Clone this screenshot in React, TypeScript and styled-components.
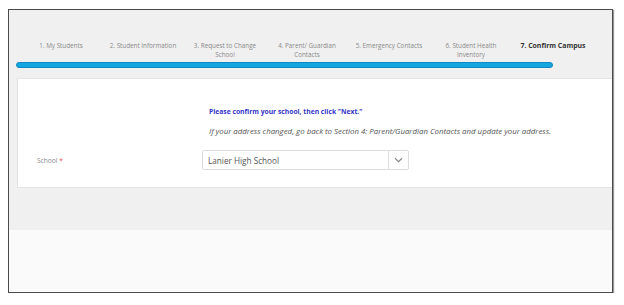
import React from 'react';
import styled, { createGlobalStyle } from 'styled-components';

const steps = [
  ['1. My Students'],
  ['2. Student Information'],
  ['3. Request to Change', 'School'],
  ['4. Parent/ Guardian', 'Contacts'],
  ['5. Emergency Contacts'],
  ['6. Student Health', 'Inventory'],
  ['7. Confirm Campus'],
];

const GlobalStyle = createGlobalStyle`
  html, body {
    margin: 0;
    padding: 0;
    background: #ffffff;
    font-family: "Open Sans", "Liberation Sans", sans-serif;
  }
`;

const App: React.FC = () => {
  return (
    <>
      <GlobalStyle />
      <Frame>
        <Header>
          <Steps>
            {steps.map((lines, i) => (
              <Step key={i} $active={i === steps.length - 1}>
                {lines.map(l => (
                  <div key={l}>{l}</div>
                ))}
              </Step>
            ))}
          </Steps>
          <ProgressBar />
        </Header>
        <Card>
          <Message>
            <Notice>Please confirm your school, then click "Next."</Notice>
            <Hint>
              If your address changed, go back to Section 4: Parent/Guardian Contacts and update your address.
            </Hint>
          </Message>
          <FieldRow>
            <Label>
              School <Required>*</Required>
            </Label>
            <Select>
              <SelectValue>Lanier High School</SelectValue>
              <SelectToggle>
                <svg width="9" height="6" viewBox="0 0 9 6" fill="none">
                  <path d="M1 1.2L4.5 4.6L8 1.2" stroke="#8a8a8a" strokeWidth="1.2" />
                </svg>
              </SelectToggle>
            </Select>
          </FieldRow>
        </Card>
        <GrayBand />
        <Footer />
      </Frame>
    </>
  );
};

export default App;

const Frame = styled.div`
  margin: 9px 11px 0 8px;
  height: 282px;
  border: 1px solid #4a4a4a;
  box-shadow: 1px 1px 1px #9a9a9a;
  background: #f0f0f0;
  display: flex;
  flex-direction: column;
  overflow: hidden;
`;

const Header = styled.div`
  padding: 31px 0 0 7px;
  height: 37px;
`;

const Steps = styled.div`
  display: grid;
  grid-template-columns: repeat(7, 82px);
  padding-left: 4px;
  height: 21px;
`;

const Step = styled.div<{ $active?: boolean }>`
  text-align: center;
  font-size: ${p => (p.$active ? '6.9px' : '6.3px')};
  line-height: 9px;
  color: ${p => (p.$active ? '#333333' : '#8a8a8a')};
  font-weight: ${p => (p.$active ? 700 : 400)};
`;

const ProgressBar = styled.div`
  width: 535px;
  height: 4px;
  background: #14a6e0;
  border: 1px solid #1488c0;
  border-radius: 3px;
`;

const Card = styled.div`
  margin-left: 8px;
  height: 108px;
  background: #ffffff;
  border: 1px solid #e4e4e4;
  border-right: none;
  display: flex;
  flex-direction: column;
`;

const Message = styled.div`
  padding: 28px 0 0 191px;
  display: flex;
  flex-direction: column;
  gap: 11px;
`;

const Notice = styled.div`
  font-size: 6.75px;
  line-height: 9px;
  font-weight: 700;
  color: #3434c8;
`;

const Hint = styled.div`
  font-size: 7.85px;
  line-height: 9px;
  font-style: italic;
  color: #555555;
  white-space: nowrap;
`;

const FieldRow = styled.div`
  display: flex;
  align-items: center;
  padding: 14px 0 0 19px;
`;

const Label = styled.div`
  width: 165px;
  font-size: 6.6px;
  color: #8a8a8a;
`;

const Required = styled.span`
  color: #e0505a;
`;

const Select = styled.div`
  width: 205px;
  height: 18px;
  border: 1px solid #dcdcdc;
  border-radius: 2px;
  display: flex;
  align-items: center;
`;

const SelectValue = styled.div`
  flex: 1;
  padding-left: 5px;
  font-size: 8.2px;
  color: #555555;
`;

const SelectToggle = styled.div`
  width: 19px;
  height: 100%;
  border-left: 1px solid #dcdcdc;
  display: flex;
  align-items: center;
  justify-content: center;
`;

const GrayBand = styled.div`
  height: 42px;
  background: #f0f0f0;
`;

const Footer = styled.div`
  flex: 1;
  background: #fafafa;
`;
